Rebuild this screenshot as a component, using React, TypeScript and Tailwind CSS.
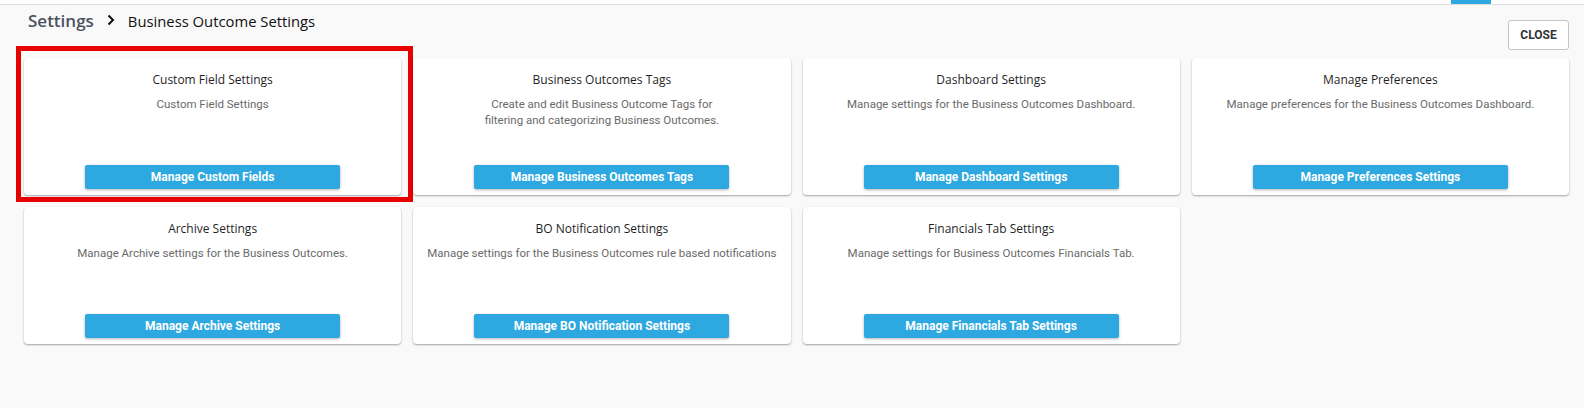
import React from "react";

interface SettingCard {
  title: string;
  description: React.ReactNode;
  action: string;
  highlighted?: boolean;
}

const cards: SettingCard[] = [
  {
    title: "Custom Field Settings",
    description: "Custom Field Settings",
    action: "Manage Custom Fields",
    highlighted: true,
  },
  {
    title: "Business Outcomes Tags",
    description: (
      <>
        Create and edit Business Outcome Tags for
        <br />
        filtering and categorizing Business Outcomes.
      </>
    ),
    action: "Manage Business Outcomes Tags",
  },
  {
    title: "Dashboard Settings",
    description: "Manage settings for the Business Outcomes Dashboard.",
    action: "Manage Dashboard Settings",
  },
  {
    title: "Manage Preferences",
    description: "Manage preferences for the Business Outcomes Dashboard.",
    action: "Manage Preferences Settings",
  },
  {
    title: "Archive Settings",
    description: "Manage Archive settings for the Business Outcomes.",
    action: "Manage Archive Settings",
  },
  {
    title: "BO Notification Settings",
    description: "Manage settings for the Business Outcomes rule based notifications",
    action: "Manage BO Notification Settings",
  },
  {
    title: "Financials Tab Settings",
    description: "Manage settings for Business Outcomes Financials Tab.",
    action: "Manage Financials Tab Settings",
  },
];

function Card({ card }: { card: SettingCard }) {
  return (
    <div className="relative flex h-[137px] flex-col items-center rounded-[4px] bg-white px-1 pb-[6px] pt-[14px] text-center shadow-[0_1px_2px_rgba(0,0,0,0.35)]">
      <h3 className="font-['Open_Sans',sans-serif] text-[12px] leading-[16px] text-[#1f1f1f]">
        {card.title}
      </h3>
      <p className="mt-[8px] font-['Roboto',sans-serif] text-[11.5px] leading-[16px] text-[#6a6a6a]">
        {card.description}
      </p>
      <button className="mt-auto h-[24px] w-[255px] rounded-[2px] bg-[#2ea8e0] font-['Roboto',sans-serif] text-[12px] font-bold text-white shadow-[0_1px_3px_rgba(0,0,0,0.3)]">
        {card.action}
      </button>
      {card.highlighted && (
        <div className="pointer-events-none absolute -bottom-[7px] -left-[8px] -right-[12px] -top-[12px] border-[5px] border-[#e60000]" />
      )}
    </div>
  );
}

export default function App() {
  return (
    <div className="min-h-[408px] w-full bg-[#f9f9f9]">
      {/* top tab strip */}
      <div className="flex h-[5px] border-b border-[#dcdcdc] bg-white">
        <div className="ml-[1451px] h-[4px] w-[40px] bg-[#2ea8e0]" />
      </div>

      <div className="flex items-center gap-[13px] pl-[28px] pt-[4px]">
        <span className="font-['Open_Sans',sans-serif] text-[17px] font-semibold leading-[24px] text-[#4a5160]">
          Settings
        </span>
        <svg width="8" height="12" viewBox="0 0 8 12" className="-mt-[3px]">
          <path d="M1.5 1.5 L6 6 L1.5 10.5" fill="none" stroke="#111" strokeWidth="2" />
        </svg>
        <span className="font-['Open_Sans',sans-serif] text-[14.8px] leading-[24px] text-[#111]">
          Business Outcome Settings
        </span>
      </div>

      <div className="-mt-[13px] flex justify-end pr-[15px]">
        <button className="h-[30px] w-[61px] rounded-[3px] border border-[#c4c4c4] bg-white font-['Roboto',sans-serif] text-[12px] font-bold text-[#333]">
          CLOSE
        </button>
      </div>

      <div className="mt-[8px] grid grid-cols-4 gap-x-[12px] gap-y-[12px] pl-[24px] pr-[15px]">
        {cards.map((card) => (
          <Card key={card.title} card={card} />
        ))}
      </div>
    </div>
  );
}
